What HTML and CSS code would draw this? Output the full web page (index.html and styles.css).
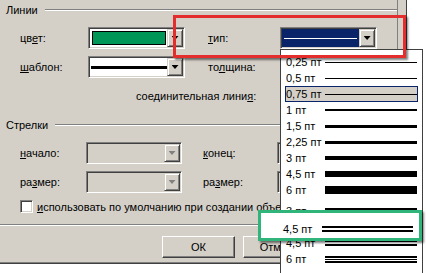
FILE: index.html
```html
<!DOCTYPE html>
<html lang="ru">
<head>
  <meta charset="UTF-8" />
  <title>Линии</title>
  <link rel="stylesheet" href="styles.css">
</head>
<body>
  <div class="dialog">
    <div class="panel">
      <div class="legend"><span>Линии</span><i class="rule"></i></div>

      <div class="row r1">
        <span class="lbl w1">цв<u>е</u>т:</span>
        <div class="combo wide">
          <span class="swatch"></span>
          <b class="btn"><i class="tri"></i></b>
        </div>
        <span class="lbl w2"><u>т</u>ип:</span>
        <div class="combo wide">
          <span class="sel"><i></i></span>
          <b class="btn"><i class="tri"></i></b>
        </div>
      </div>

      <div class="row r2">
        <span class="lbl w1"><u>ш</u>аблон:</span>
        <div class="combo wide">
          <span class="dash"></span>
          <b class="btn"><i class="tri"></i></b>
        </div>
        <span class="lbl w2">то<u>л</u>щина:</span>
        <div class="combo wide"><b class="btn"><i class="tri"></i></b></div>
      </div>

      <div class="row r3">
        <span class="lbl">соединительная лини<u>я</u>:</span>
      </div>

      <div class="legend l2"><span>Стрелки</span><i class="rule"></i></div>

      <div class="row r4">
        <span class="lbl w3"><u>н</u>ачало:</span>
        <div class="combo off"><b class="btn"><i class="tri"></i></b></div>
        <span class="lbl w4"><u>к</u>онец:</span>
        <div class="combo off"><b class="btn"><i class="tri"></i></b></div>
      </div>

      <div class="row r5">
        <span class="lbl w3">ра<u>з</u>мер:</span>
        <div class="combo off"><b class="btn"><i class="tri"></i></b></div>
        <span class="lbl w4">ра<u>з</u>мер:</span>
        <div class="combo off"><b class="btn"><i class="tri"></i></b></div>
      </div>

      <div class="row r6">
        <span class="check"></span>
        <span class="lbl"><u>и</u>спользовать по умолчанию при создании объектов</span>
      </div>
    </div>

    <div class="sep"></div>
    <div class="buttons">
      <button class="push">ОК</button>
      <button class="push">Отмена</button>
    </div>
  </div>

  <div class="list">
    <div class="item"><span class="txt">0,25 пт</span><i class="ln" style="height:1px"></i></div>
    <div class="item"><span class="txt">0,5 пт</span><i class="ln" style="height:1px"></i></div>
    <div class="item current"><span class="txt">0,75 пт</span><i class="ln" style="height:1px"></i></div>
    <div class="item"><span class="txt">1 пт</span><i class="ln" style="height:2px"></i></div>
    <div class="item"><span class="txt">1,5 пт</span><i class="ln" style="height:3px"></i></div>
    <div class="item"><span class="txt">2,25 пт</span><i class="ln" style="height:3px"></i></div>
    <div class="item"><span class="txt">3 пт</span><i class="ln" style="height:4px"></i></div>
    <div class="item"><span class="txt">4,5 пт</span><i class="ln" style="height:6px"></i></div>
    <div class="item"><span class="txt">6 пт</span><i class="ln" style="height:8px"></i></div>
    <div class="item gap"><span class="txt">3 пт</span><i class="ln dbl"></i></div>
    <div class="item"><span class="txt">4,5 пт</span><i class="ln dbl"></i></div>
    <div class="item"><span class="txt">4,5 пт</span><i class="ln dbl thin"></i></div>
    <div class="item"><span class="txt">6 пт</span><i class="ln tri3"></i></div>
  </div>

  <div class="mark red"></div>
  <div class="mark green">
    <div class="item"><span class="txt">4,5 пт</span><i class="ln dbl"></i></div>
  </div>
</body>
</html>
```

FILE: styles.css
```css
body {
  margin: 0;
  width: 426px;
  height: 273px;
  overflow: hidden;
  position: relative;
  background: #fff;
  font-family: "Liberation Sans", Arial, sans-serif;
  font-size: 11px;
  color: #000;
}
.dialog {
  width: 406px;
  height: 262px;
  background: #d4d0c8;
  border-right: 1px solid #404040;
  border-bottom: 1px solid #808080;
  box-shadow: 0 1px 0 #404040;
}
.panel {
  width: 397px;
  height: 224px;
  border-right: 1px solid #808080;
}
.legend {
  display: flex;
  align-items: center;
  height: 20px;
  padding-left: 6px;
}
.legend .rule {
  flex: 1;
  margin-left: 7px;
  border-top: 1px solid #808080;
  border-bottom: 1px solid #fff;
}
.l2 { margin-top: 9px; }
.row {
  display: flex;
  align-items: center;
  height: 22px;
  padding-left: 20px;
}
.r1 { margin-top: 7px; }
.r2 { margin-top: 7px; }
.r3 { margin-top: 8px; height: 20px; padding-left: 136px; }
.r4 { margin-top: 7px; }
.r5 { margin-top: 7px; }
.r6 { margin-top: 7px; height: 13px; }
.lbl { white-space: nowrap; }
.w1 { width: 68px; }
.w2 { width: 72px; margin-left: 23px; }
.w3 { width: 66px; }
.w4 { width: 74px; margin-left: 21px; }

/* sunken combo boxes */
.combo {
  box-sizing: border-box;
  display: flex;
  align-items: center;
  width: 96px;
  height: 22px;
  padding: 1px;
  background: #fff;
  border: 1px solid;
  border-color: #808080 #fff #fff #808080;
  box-shadow: inset 1px 1px #404040, inset -1px -1px #d4d0c8;
}
.combo.wide { width: 97px; }
.combo.off { background: #d4d0c8; }
.btn {
  box-sizing: border-box;
  display: flex;
  align-items: center;
  justify-content: center;
  width: 16px;
  height: 18px;
  margin-left: auto;
  background: #d4d0c8;
  border: 1px solid;
  border-color: #d4d0c8 #404040 #404040 #d4d0c8;
  box-shadow: inset 1px 1px #fff, inset -1px -1px #808080;
}
.tri {
  width: 7px;
  height: 4px;
  background: #000;
  clip-path: polygon(0 0, 100% 0, 50% 100%);
}
.off .tri { background: #808080; }
.swatch {
  box-sizing: border-box;
  width: 74px;
  height: 14px;
  margin-left: 2px;
  background: #009658;
  border: 1px solid #000;
}
.dash {
  width: 76px;
  height: 3px;
  margin-left: 1px;
  background: #000;
}
.sel {
  display: flex;
  align-items: center;
  width: 79px;
  height: 18px;
  background: #0a246a;
}
.sel i {
  flex: 1;
  height: 1px;
  margin: 0 2px;
  background: #fff;
}
.check {
  box-sizing: border-box;
  width: 13px;
  height: 13px;
  margin-right: 4px;
  background: #fff;
  border: 1px solid;
  border-color: #808080 #fff #fff #808080;
  box-shadow: inset 1px 1px #404040, inset -1px -1px #d4d0c8;
}

.sep {
  border-top: 1px solid #808080;
  border-bottom: 1px solid #fff;
}
.buttons {
  display: flex;
  gap: 8px;
  margin-top: 10px;
  padding-left: 162px;
}
.push {
  box-sizing: border-box;
  width: 73px;
  height: 22px;
  padding: 0;
  font: inherit;
  color: #000;
  background: #d4d0c8;
  border: 1px solid;
  border-color: #fff #404040 #404040 #fff;
  box-shadow: inset -1px -1px #808080;
}

/* open dropdown of line styles */
.list {
  position: absolute;
  left: 280px;
  top: 49px;
  box-sizing: border-box;
  width: 143px;
  height: 224px;
  overflow: hidden;
  padding-top: 4px;
  background: #fff;
  border: 1px solid #404040;
  border-bottom: 0;
}
.item {
  box-sizing: border-box;
  display: flex;
  align-items: center;
  height: 16px;
  padding: 0 5px;
  white-space: nowrap;
}
.item.current {
  margin: 0 4px;
  padding: 0;
  background: #d4d0c8;
  border: 1px solid #0a246a;
}
.item.gap { margin-top: 5px; }
.txt { min-width: 38px; padding-right: 1px; }
.ln {
  flex: 1;
  background: #000;
}
.ln.dbl {
  height: 2px;
  background: none;
  border-top: 2px solid #000;
  border-bottom: 2px solid #000;
}
.ln.thin { border-top-width: 1px; }
.ln.tri3 {
  height: 7px;
  background: linear-gradient(#000 0 2px, transparent 2px 3px, #000 3px 4px, transparent 4px 5px, #000 5px 7px);
}

/* highlight frames drawn over the screenshot */
.mark {
  position: absolute;
  box-sizing: border-box;
  border: 3px solid;
  box-shadow: 2px 2px 2px rgba(0, 0, 0, 0.5);
}
.red {
  left: 173px;
  top: 15px;
  width: 233px;
  height: 43px;
  border-color: #e42d2d;
}
.green {
  left: 258px;
  top: 210px;
  width: 164px;
  height: 31px;
  padding: 8px 6px 0 22px;
  background: #fff;
  border-color: #2fb57a;
}
.green .item { padding: 0; }
```
